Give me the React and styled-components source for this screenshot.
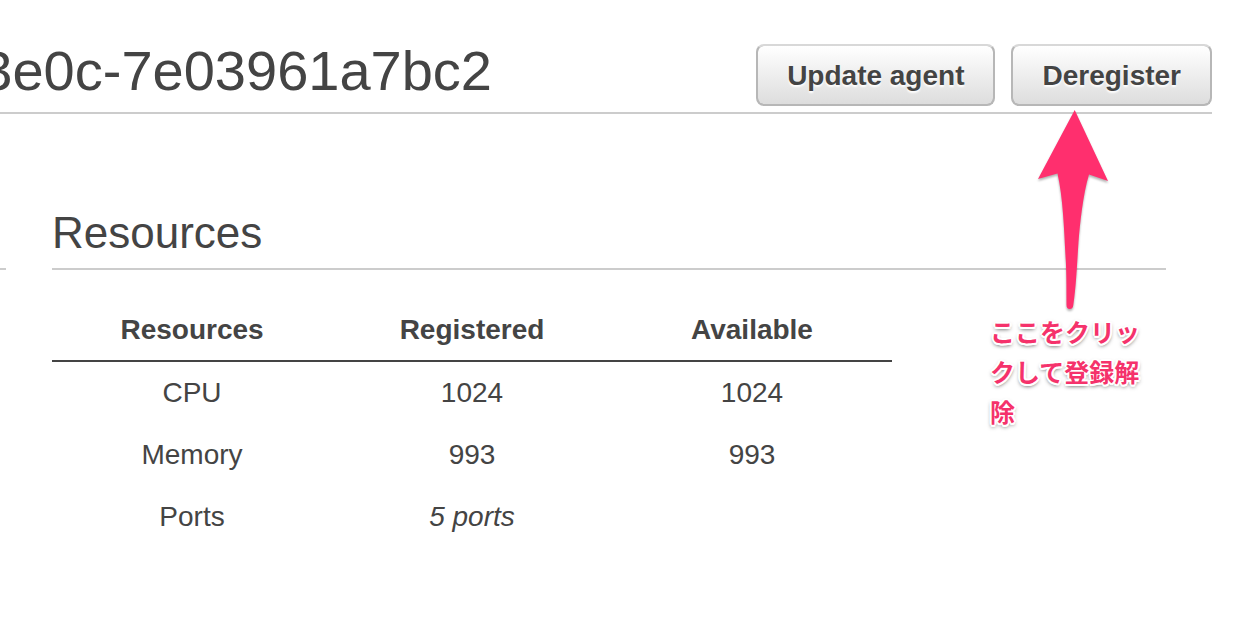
import React from "react";
import styled, { createGlobalStyle } from "styled-components";

const GlobalStyle = createGlobalStyle`
  * { box-sizing: border-box; }
  body {
    margin: 0;
    background: #fff;
    color: #444;
    font-family: "Liberation Sans", Arial, sans-serif;
    font-size: 28px;
    line-height: 32px;
  }
`;

const Page = styled.div`
  position: relative;
  overflow: hidden;
  padding: 44px 0 68px;
`;

const Header = styled.header`
  display: flex;
  align-items: flex-start;
  justify-content: space-between;
  gap: 24px;
  margin-right: 30px;
  padding-bottom: 6px;
  border-bottom: 2px solid #ccc;
`;

const TitleClip = styled.div`
  display: flex;
  flex: 0 1 492px;
  justify-content: flex-end;
  overflow: hidden;
`;

const Title = styled.h1`
  flex: none;
  margin: 0;
  font-size: 56px;
  font-weight: 400;
  line-height: 54px;
  white-space: nowrap;
`;

const Actions = styled.div`
  display: flex;
  flex: none;
  gap: 16px;
`;

const Button = styled.button`
  height: 62px;
  padding: 2px 29px 0;
  border: 2px solid #b7b7b7;
  border-top-color: #d8d8d8;
  border-radius: 8px;
  background: linear-gradient(#fff, #ddd) padding-box, #b7b7b7;
  color: #444;
  font: bold 28px "Liberation Sans", Arial, sans-serif;
  text-shadow: 0 2px 2px #fff;
  white-space: nowrap;
  cursor: pointer;
`;

const Columns = styled.main`
  display: grid;
  grid-template-columns: 6px minmax(0, 1fr);
  gap: 46px;
  margin: 94px 76px 0 0;
`;

const PreviousPanel = styled.div`
  height: 62px;
  border-bottom: 2px solid #ccc;
`;

const SectionTitle = styled.h2`
  height: 62px;
  margin: 0 0 28px;
  border-bottom: 2px solid #ccc;
  font-size: 44px;
  font-weight: 400;
  line-height: 50px;
`;

const Table = styled.table`
  width: 100%;
  max-width: 840px;
  border-collapse: separate;
  border-spacing: 0;
  table-layout: fixed;
  text-align: center;
`;

const HeadCell = styled.th`
  height: 64px;
  padding: 2px 0 0;
  border-bottom: 2px solid #444;
  font-weight: 700;
`;

const Cell = styled.td`
  height: 62px;
  padding: 0;
  font-style: ${(p) => (p.$italic ? "italic" : "normal")};
`;

const Callout = styled.aside`
  position: absolute;
  top: 108px;
  right: 100px;
  width: 152px;
`;

const Arrow = styled.svg`
  display: block;
  width: 76px;
  height: 203px;
  margin-left: 44px;
  filter: drop-shadow(0 2px 1px rgba(0, 0, 0, 0.3));
`;

const CalloutText = styled.p`
  margin: 0;
  color: #f5326b;
  font: bold 25px / 40px "Noto Sans CJK JP", sans-serif;
  word-break: break-all;
  line-break: anywhere;
  text-shadow:
    2px 0 0 #fff, -2px 0 0 #fff, 0 2px 0 #fff, 0 -2px 0 #fff,
    1px 2px 0 #fff, -1px 2px 0 #fff, 2px -1px 0 #fff, -2px -1px 0 #fff,
    0 2px 4px rgba(0, 0, 0, 0.8);
`;

const rows = [
  { name: "CPU", registered: "1024", available: "1024" },
  { name: "Memory", registered: "993", available: "993" },
  { name: "Ports", registered: "5 ports", available: "", italic: true },
];

export default function App() {
  return (
    <Page>
      <GlobalStyle />
      <Header>
        <TitleClip>
          <Title>3e0c-7e03961a7bc2</Title>
        </TitleClip>
        <Actions>
          <Button type="button">Update agent</Button>
          <Button type="button">Deregister</Button>
        </Actions>
      </Header>
      <Columns>
        <PreviousPanel />
        <section>
          <SectionTitle>Resources</SectionTitle>
          <Table>
            <thead>
              <tr>
                <HeadCell scope="col">Resources</HeadCell>
                <HeadCell scope="col">Registered</HeadCell>
                <HeadCell scope="col">Available</HeadCell>
              </tr>
            </thead>
            <tbody>
              {rows.map((r) => (
                <tr key={r.name}>
                  <Cell>{r.name}</Cell>
                  <Cell $italic={r.italic}>{r.registered}</Cell>
                  <Cell>{r.available}</Cell>
                </tr>
              ))}
            </tbody>
          </Table>
        </section>
      </Columns>
      <Callout>
        <Arrow viewBox="0 0 76 203" aria-hidden="true">
          <path
            fill="#ff2f6e"
            d="M40.7 2 L74 73 L55 66.5 C49 86 46 116 44.5 134 C43 156 42.2 178 39.3 197 Q39 201 35.7 201 Q32.5 201 32.5 197 C32.5 178 32.4 160 31.6 150 C30 120 29 90 23.5 65.5 L4 71 Z"
          />
        </Arrow>
        <CalloutText>ここをクリックして登録解除</CalloutText>
      </Callout>
    </Page>
  );
}
